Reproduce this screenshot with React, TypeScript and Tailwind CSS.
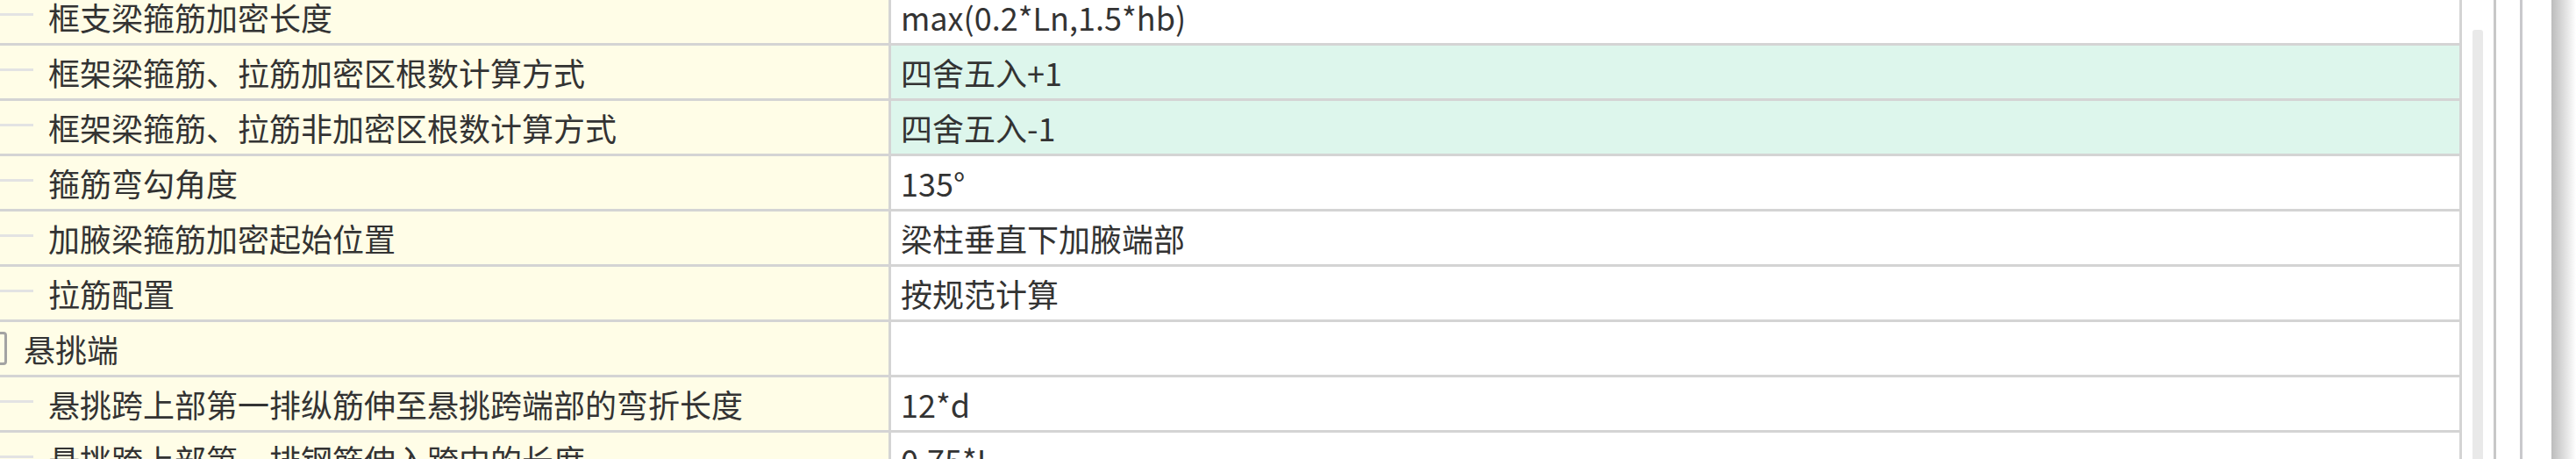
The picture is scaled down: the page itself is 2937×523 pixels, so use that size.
import React from "react";

type Row = {
  label: string;
  value: string;
  group?: boolean;
  tint?: boolean;
};

const rows: Row[] = [
  { label: "框支梁箍筋加密长度", value: "max(0.2*Ln,1.5*hb)" },
  { label: "框架梁箍筋、拉筋加密区根数计算方式", value: "四舍五入+1", tint: true },
  { label: "框架梁箍筋、拉筋非加密区根数计算方式", value: "四舍五入-1", tint: true },
  { label: "箍筋弯勾角度", value: "135°" },
  { label: "加腋梁箍筋加密起始位置", value: "梁柱垂直下加腋端部" },
  { label: "拉筋配置", value: "按规范计算" },
  { label: "悬挑端", value: "", group: true },
  { label: "悬挑跨上部第一排纵筋伸至悬挑跨端部的弯折长度", value: "12*d" },
  { label: "悬挑跨上部第一排钢筋伸入跨中的长度", value: "0.75*L" },
];

function PropertyRow({ row }: { row: Row }) {
  return (
    <div className="flex h-[63px] shrink-0 border-b-[3px] border-[#d4d4d4]">
      <div className="flex w-[1016px] shrink-0 items-center border-r-[3px] border-[#d4d4d4] bg-[#fffde7]">
        {row.group ? (
          <>
            <span className="-ml-[22px] h-[38px] w-[30px] shrink-0 rounded-[4px] border-[3px] border-[#a3a3a3]" />
            <span className="ml-[19px] whitespace-nowrap">{row.label}</span>
          </>
        ) : (
          <>
            <span className="-mt-[5px] h-[3px] w-[38px] shrink-0 bg-[#e3e3e3]" />
            <span className="ml-[17px] whitespace-nowrap">{row.label}</span>
          </>
        )}
      </div>
      <div
        className={
          row.tint
            ? "flex flex-1 items-center border-r-[3px] border-[#d4d4d4] bg-[#ddf6ec] pl-[11px]"
            : "flex flex-1 items-center border-r-[3px] border-[#d4d4d4] bg-white pl-[11px]"
        }
      >
        <span className="whitespace-nowrap">{row.value}</span>
      </div>
    </div>
  );
}

export default function App() {
  return (
    <div
      className="flex h-[523px] w-[2937px] overflow-hidden bg-white text-[36px] leading-none text-[#333333]"
      style={{ fontFamily: '"Noto Sans CJK SC", "Noto Sans", sans-serif' }}
    >
      <div className="-mt-[11px] flex w-[2807px] shrink-0 flex-col">
        {rows.map((row) => (
          <PropertyRow key={row.label} row={row} />
        ))}
      </div>

      {/* vertical scrollbar */}
      <div className="flex w-[36px] shrink-0 flex-col pl-[12px] pt-[34px]">
        <div className="w-[12px] flex-1 rounded-t-[3px] bg-[#e9e9e9]" />
      </div>

      {/* side strip */}
      <div className="w-[3px] shrink-0 bg-[#c8c8c8]" />
      <div className="w-[27px] shrink-0 bg-white" />
      <div className="w-[3px] shrink-0 bg-[#c9c9cc]" />
      <div className="w-[33px] shrink-0 bg-white" />
      <div className="w-[28px] shrink-0 bg-gradient-to-r from-[#bcbcbc] to-white" />
    </div>
  );
}
